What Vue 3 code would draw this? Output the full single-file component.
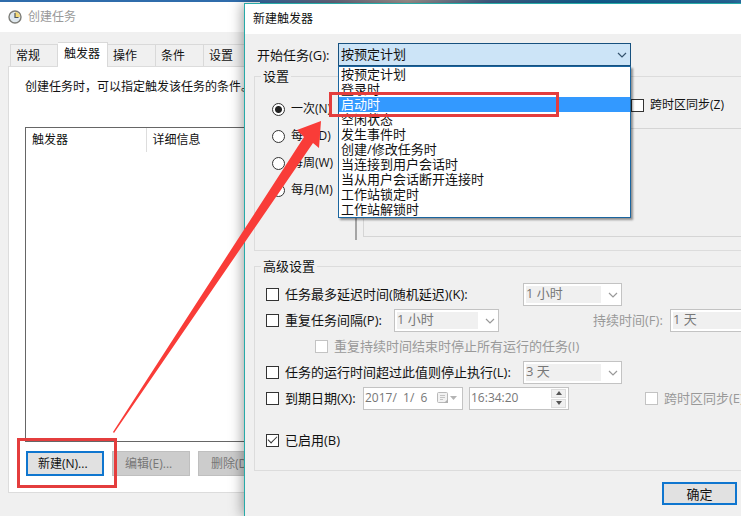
<script setup>
import { ref } from 'vue'

const tabs = ['常规', '触发器', '操作', '条件', '设置']
const activeTab = ref('触发器')
const starts = [
  '按预定计划', '登录时', '启动时', '空闲状态', '发生事件时', '创建/修改任务时',
  '当连接到用户会话时', '当从用户会话断开连接时', '工作站锁定时', '工作站解锁时'
]
const start = ref('按预定计划')
const highlighted = ref('启动时')
const periods = ['一次(N)', '每天(D)', '每周(W)', '每月(M)']
const period = ref('一次(N)')
const enabled = ref(true)
</script>

<template>
  <main class="desktop">
    <section class="window task-window">
      <header class="title muted">
        <svg class="clock" viewBox="0 0 14 14" aria-hidden="true">
          <circle cx="7" cy="7" r="6" fill="#dfe8ee" stroke="#7d7d78" stroke-width="1.4" />
          <path d="M7 7V2A5 5 0 0 1 12 7Z" fill="#f3d876" />
          <path d="M7 3V7.5H10.5" fill="none" stroke="#4c565e" stroke-width="1.2" />
        </svg>
        <span>创建任务</span>
      </header>
      <div class="task-body">
        <nav class="tabs">
          <button v-for="t in tabs" :key="t" class="tab" :class="{ active: t === activeTab }" @click="activeTab = t">{{ t }}</button>
        </nav>
        <div class="panel">
          <p class="hint">创建任务时，可以指定触发该任务的条件。</p>
          <div class="list">
            <table class="triggers">
              <thead><tr><th class="first">触发器</th><th>详细信息</th></tr></thead>
            </table>
          </div>
          <div class="actions">
            <button class="btn primary">新建(N)...</button>
            <button class="btn" disabled>编辑(E)...</button>
            <button class="btn" disabled>删除(D)</button>
          </div>
        </div>
      </div>
    </section>

    <section class="window dialog">
      <header class="title">新建触发器</header>
      <div class="dialog-body">
        <div class="start-row">
          <label for="start">开始任务(G):</label>
          <div class="combo open">
            <select id="start" v-model="start">
              <option v-for="s in starts" :key="s">{{ s }}</option>
            </select>
            <svg class="chevron" viewBox="0 0 10 6" aria-hidden="true"><path d="M1 1L5 5L9 1" /></svg>
            <ul class="menu">
              <li v-for="s in starts" :key="s" :class="{ hot: s === highlighted }" @mouseenter="highlighted = s">{{ s }}</li>
            </ul>
          </div>
        </div>

        <fieldset class="group settings">
          <legend>设置</legend>
          <div class="settings-grid">
            <div class="periods">
              <label v-for="p in periods" :key="p" class="check">
                <input v-model="period" type="radio" name="period" :value="p">{{ p }}
              </label>
            </div>
            <div class="detail">
              <label class="check zone"><input type="checkbox">跨时区同步(Z)</label>
              <div class="detail-box"></div>
            </div>
          </div>
        </fieldset>

        <fieldset class="group advanced">
          <legend>高级设置</legend>
          <div class="rows">
            <div class="row">
              <label class="check wide"><input type="checkbox">任务最多延迟时间(随机延迟)(K):</label>
              <div class="combo off small">
                <select disabled aria-label="延迟时间"><option>1 小时</option></select>
                <svg class="chevron" viewBox="0 0 10 6" aria-hidden="true"><path d="M1 1L5 5L9 1" /></svg>
              </div>
            </div>
            <div class="row">
              <label class="check mid"><input type="checkbox">重复任务间隔(P):</label>
              <div class="combo off medium">
                <select disabled aria-label="间隔"><option>1 小时</option></select>
                <svg class="chevron" viewBox="0 0 10 6" aria-hidden="true"><path d="M1 1L5 5L9 1" /></svg>
              </div>
              <label class="duration" for="duration">持续时间(F):</label>
              <div class="combo off medium">
                <select id="duration" disabled><option>1 天</option></select>
                <svg class="chevron" viewBox="0 0 10 6" aria-hidden="true"><path d="M1 1L5 5L9 1" /></svg>
              </div>
            </div>
            <div class="row">
              <label class="check indent disabled"><input type="checkbox" disabled>重复持续时间结束时停止所有运行的任务(I)</label>
            </div>
            <div class="row">
              <label class="check wide"><input type="checkbox">任务的运行时间超过此值则停止执行(L):</label>
              <div class="combo off small">
                <select disabled aria-label="停止时间"><option>3 天</option></select>
                <svg class="chevron" viewBox="0 0 10 6" aria-hidden="true"><path d="M1 1L5 5L9 1" /></svg>
              </div>
            </div>
            <div class="row">
              <label class="check narrow"><input type="checkbox">到期日期(X):</label>
              <div class="field">
                <input type="text" value="2017/  1/  6" disabled aria-label="到期日期">
                <svg class="calendar" viewBox="0 0 20 12" aria-hidden="true">
                  <rect x="0.5" y="0.5" width="10" height="10" rx="1" fill="#f2f2f2" stroke="#b9b9b9" />
                  <path d="M3 3.5H8M3 5.5H8M3 7.5H6" stroke="#c4c4c4" />
                  <path d="M7 11L11 7V11Z" fill="#b0b0b0" />
                  <path d="M13 4H20L16.500 8Z" fill="#b4b4b4" />
                </svg>
              </div>
              <div class="field time">
                <input type="text" value="16:34:20" disabled aria-label="到期时间">
                <span class="spinner">
                  <button disabled aria-label="增加"><svg viewBox="0 0 6 4"><path d="M0 4L3 0L6 4Z" /></svg></button>
                  <button disabled aria-label="减少"><svg viewBox="0 0 6 4"><path d="M0 0L3 4L6 0Z" /></svg></button>
                </span>
              </div>
              <label class="check disabled expiry-zone"><input type="checkbox" disabled>跨时区同步(E)</label>
            </div>
            <div class="row enabled">
              <label class="check"><input v-model="enabled" type="checkbox">已启用(B)</label>
            </div>
          </div>
        </fieldset>

        <footer class="footer"><button class="btn primary">确定</button></footer>
      </div>
    </section>

    <div class="mark mark-button"></div>
    <div class="mark mark-option"></div>
    <svg class="arrow" aria-hidden="true">
      <path d="M113 432L304 137L297 130L321 121L319 148L313 143L114 433Z" fill="#f93c38" />
    </svg>
  </main>
</template>

<style>
body {
  margin: 0;
}
</style>

<style scoped>
* {
  box-sizing: border-box;
}
.desktop {
  position: relative;
  min-height: 100vh;
  overflow: hidden;
  background: linear-gradient(90deg, #2f6cab 0, #2f6cab 33%, #6d6b83 45%, #a79a96 55%, #46628c 66%, #12669b 80%, #2a70a5 100%);
  font: 12px/16px "Open Sans", "Noto Sans CJK SC", sans-serif;
  color: #111;
}
button, select, input {
  font: inherit;
  color: inherit;
  margin: 0;
}
.window {
  position: absolute;
  z-index: 0;
  bottom: 0;
  background: #f0f0f0;
  overflow: hidden;
}
.task-window {
  top: 2px;
  left: 0;
  width: 260px;
}
.dialog {
  top: 3px;
  left: 244px;
  right: 0;
  border: 1px solid #27aaa8;
  border-width: 1px 0 0 1px;
  box-shadow: -2px 0 12px rgba(0, 0, 0, 0.35);
}
.title {
  display: flex;
  align-items: center;
  gap: 6px;
  height: 30px;
  padding: 0 8px;
  background: #fff;
}
.muted {
  color: #999;
}
.clock {
  width: 14px;
  height: 14px;
}
.task-body {
  padding: 10px 0 0 8px;
}
.tabs {
  display: flex;
  align-items: flex-end;
  height: 24px;
  padding-left: 2px;
}
.tab {
  width: 48px;
  height: 22px;
  padding: 0 0 0 5px;
  border: 1px solid #d9d9d9;
  border-width: 1px 1px 0 0;
  background: #f0f0f0;
  text-align: left;
}
.tab:first-child {
  border-left-width: 1px;
}
.tab.active {
  width: 50px;
  height: 25px;
  margin-bottom: -1px;
  padding: 0 0 2px 6px;
  background: #fff;
}
.panel {
  padding: 12px 0 16px 16px;
  border: 1px solid #dcdcdc;
  background: #fff;
}
.hint {
  margin: 0 0 32px;
  white-space: nowrap;
}
.list {
  height: 315px;
  border: 1px solid #666;
}
.triggers {
  width: 100%;
  border-collapse: collapse;
}
.triggers th {
  height: 24px;
  padding: 0 6px;
  font-weight: normal;
  text-align: left;
}
.triggers .first {
  width: 120px;
  border-right: 1px solid #ddd;
}
.actions {
  display: flex;
  gap: 8px;
  padding: 9px 0 0 1px;
}
.btn {
  flex: none;
  width: 78px;
  height: 25px;
  padding: 0;
  border: 1px solid #bfbfbf;
  background: #ccc;
  white-space: nowrap;
}
.actions .btn {
  padding-left: 12px;
  text-align: left;
}
.btn:disabled {
  color: #777;
}
.btn.primary {
  border: 2px solid #0f76cf;
  background: #e1e1e1;
}
.actions .primary {
  padding-left: 10px;
}
.dialog-body {
  display: flex;
  flex-direction: column;
  padding: 9px 0 0 9px;
  font-size: 13px;
}
.start-row {
  display: flex;
  align-items: center;
  padding-left: 3px;
}
.start-row label {
  flex: none;
  width: 81px;
  white-space: nowrap;
}
.combo {
  position: relative;
  flex: none;
}
.combo select {
  display: block;
  width: 100%;
  height: 23px;
  padding: 0 20px 2px 2px;
  border: 1px solid #17517f;
  border-radius: 0;
  background: #cce4f7;
  appearance: none;
  opacity: 1;
}
.combo.open {
  width: 293px;
}
.combo.off select {
  border-color: #c3c3c3;
  background: linear-gradient(#f0f0f0, #f0f0f0) 2px 2px / calc(100% - 22px) calc(100% - 4px) no-repeat #fff;
  color: #777;
}
.combo.small {
  width: 99px;
}
.combo.medium {
  width: 105px;
}
.chevron {
  position: absolute;
  top: 9px;
  right: 4px;
  width: 10px;
  height: 6px;
  fill: none;
  stroke: #35546e;
  stroke-width: 1.2;
  pointer-events: none;
}
.off .chevron {
  stroke: #999;
}
.menu {
  position: absolute;
  z-index: 2;
  top: 100%;
  left: 0;
  right: 0;
  margin: 0;
  padding: 0;
  border: 1px solid #1a659f;
  background: #fff;
  box-shadow: 2px 2px 2px rgba(0, 0, 0, 0.4);
  list-style: none;
}
.menu li {
  height: 15px;
  padding-left: 2px;
  line-height: 15px;
}
.menu .hot {
  background: #3399ff;
  color: #fff;
}
.group {
  min-width: 0;
  margin: 0;
  padding: 0;
  border: 1px solid #dcdcdc;
  border-right: 0;
}
.group legend {
  margin-left: 6px;
  padding: 0 2px;
}
.settings {
  height: 183px;
  margin-top: 2px;
}
.settings-grid {
  display: grid;
  grid-template-columns: 102px 1fr;
  gap: 6px;
  height: 156px;
  font-size: 12px;
}
.periods {
  display: flex;
  flex-direction: column;
  gap: 11px;
  padding: 17px 0 0 17px;
  border-right: 2px solid #a5a5a5;
}
.check {
  display: flex;
  flex: none;
  align-items: center;
  gap: 6px;
  white-space: nowrap;
}
.check input {
  flex: none;
  width: 13px;
  height: 13px;
  border: 1px solid #333;
  background: #fff;
  appearance: none;
}
.check input[type="radio"] {
  border-radius: 50%;
}
.check input[type="radio"]:checked {
  background: radial-gradient(circle, #222 0 3px, #fff 4px);
}
.check input[type="checkbox"]:checked {
  display: grid;
  place-items: center;
}
.check input[type="checkbox"]:checked::after {
  content: "";
  width: 8px;
  height: 4px;
  margin-bottom: 3px;
  border: solid #333;
  border-width: 0 0 1px 1px;
  transform: rotate(-45deg);
}
.check input:disabled {
  border-color: #c3c3c3;
}
.disabled, .duration {
  color: #999;
}
.detail {
  display: flex;
  flex-direction: column;
  gap: 15px;
  padding-top: 13px;
}
.zone {
  padding-left: 268px;
}
.detail-box {
  height: 109px;
  border: 1px solid #d5d5d5;
  border-right: 0;
}
.advanced {
  margin-top: 7px;
}
.rows {
  padding: 7px 0 17px 11px;
}
.row {
  display: flex;
  align-items: center;
  height: 26px;
}
.wide {
  width: 257px;
}
.mid {
  width: 128px;
}
.narrow {
  width: 97px;
}
.indent {
  padding-left: 49px;
}
.duration {
  flex: none;
  width: 77px;
  margin-left: 94px;
  white-space: nowrap;
}
.field {
  display: flex;
  flex: none;
  align-items: center;
  width: 100px;
  height: 23px;
  padding: 0 2px 0 1px;
  border: 1px solid #c3c3c3;
  background: #fff;
  color: #777;
  font-size: 12px;
}
.field input {
  flex: 1;
  min-width: 0;
  padding: 0;
  border: 0;
  background: transparent;
  white-space: pre;
}
.calendar {
  flex: none;
  width: 20px;
  height: 12px;
  margin-right: 3px;
}
.time {
  margin-left: 6px;
}
.spinner {
  display: grid;
  gap: 1px;
  width: 15px;
}
.spinner button {
  display: grid;
  place-items: center;
  height: 9px;
  padding: 0;
  border: 1px solid #ddd;
  background: #f0f0f0;
}
.spinner svg {
  width: 6px;
  height: 4px;
  fill: #555;
}
.expiry-zone {
  margin-left: 76px;
}
.enabled {
  margin-top: 16px;
}
.footer {
  display: flex;
  justify-content: flex-end;
  padding: 11px 4px 0 0;
}
.footer .btn {
  width: 75px;
  height: 23px;
}
.mark {
  position: absolute;
  z-index: 1;
  border: 3px solid #e43d3d;
  pointer-events: none;
}
.mark-button {
  top: 438px;
  left: 17px;
  width: 100px;
  height: 50px;
}
.mark-option {
  top: 92px;
  left: 329px;
  width: 230px;
  height: 25px;
}
.arrow {
  position: absolute;
  z-index: 1;
  inset: 0;
  width: 100%;
  height: 100%;
  pointer-events: none;
}
</style>
